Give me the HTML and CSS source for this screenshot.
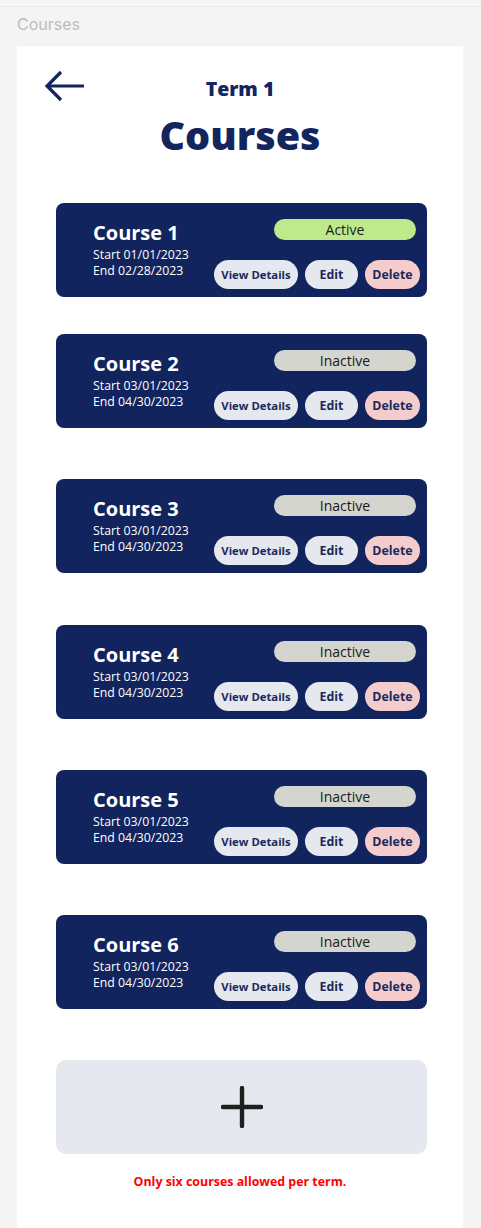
FILE: index.html
```html
<!DOCTYPE html>
<html lang="en">
<head>
<meta charset="utf-8">
<title>Courses</title>
<link rel="stylesheet" href="styles.css">
</head>
<body>
<div class="topbar"></div>
<div class="page-label">Courses</div>
<main class="panel">
  <header class="header">
    <button class="back" aria-label="Back">
      <svg width="42" height="34" viewBox="0 0 42 34"><path d="M40 17H3M17 3L3 17L17 31" fill="none" stroke="#13255f" stroke-width="3.2" stroke-linecap="butt" stroke-linejoin="miter"/></svg>
    </button>
    <div class="titles">
      <div class="term">Term 1</div>
      <h1 class="title">Courses</h1>
    </div>
    <div></div>
  </header>

  <section class="list">
    <article class="card first">
      <div class="info">
        <div class="name">Course 1</div>
        <div class="date">Start 01/01/2023</div>
        <div class="date">End 02/28/2023</div>
      </div>
      <div class="side">
        <div class="pill active">Active</div>
        <div class="actions">
          <button class="btn view">View Details</button>
          <button class="btn edit">Edit</button>
          <button class="btn del">Delete</button>
        </div>
      </div>
    </article>
    <article class="card">
      <div class="info">
        <div class="name">Course 2</div>
        <div class="date">Start 03/01/2023</div>
        <div class="date">End 04/30/2023</div>
      </div>
      <div class="side">
        <div class="pill">Inactive</div>
        <div class="actions">
          <button class="btn view">View Details</button>
          <button class="btn edit">Edit</button>
          <button class="btn del">Delete</button>
        </div>
      </div>
    </article>
    <article class="card">
      <div class="info">
        <div class="name">Course 3</div>
        <div class="date">Start 03/01/2023</div>
        <div class="date">End 04/30/2023</div>
      </div>
      <div class="side">
        <div class="pill">Inactive</div>
        <div class="actions">
          <button class="btn view">View Details</button>
          <button class="btn edit">Edit</button>
          <button class="btn del">Delete</button>
        </div>
      </div>
    </article>
    <article class="card">
      <div class="info">
        <div class="name">Course 4</div>
        <div class="date">Start 03/01/2023</div>
        <div class="date">End 04/30/2023</div>
      </div>
      <div class="side">
        <div class="pill">Inactive</div>
        <div class="actions">
          <button class="btn view">View Details</button>
          <button class="btn edit">Edit</button>
          <button class="btn del">Delete</button>
        </div>
      </div>
    </article>
    <article class="card">
      <div class="info">
        <div class="name">Course 5</div>
        <div class="date">Start 03/01/2023</div>
        <div class="date">End 04/30/2023</div>
      </div>
      <div class="side">
        <div class="pill">Inactive</div>
        <div class="actions">
          <button class="btn view">View Details</button>
          <button class="btn edit">Edit</button>
          <button class="btn del">Delete</button>
        </div>
      </div>
    </article>
    <article class="card">
      <div class="info">
        <div class="name">Course 6</div>
        <div class="date">Start 03/01/2023</div>
        <div class="date">End 04/30/2023</div>
      </div>
      <div class="side">
        <div class="pill">Inactive</div>
        <div class="actions">
          <button class="btn view">View Details</button>
          <button class="btn edit">Edit</button>
          <button class="btn del">Delete</button>
        </div>
      </div>
    </article>
    <button class="add" aria-label="Add course">
      <svg width="42" height="42" viewBox="0 0 42 42"><path d="M21 2V40M2 21H40" stroke="#1f1f1f" stroke-width="4.4" stroke-linecap="round"/></svg>
    </button>
  </section>
  <p class="error">Only six courses allowed per term.</p>
</main>
</body>
</html>
```

FILE: styles.css
```css
* { box-sizing: border-box; }

html, body {
  margin: 0;
  padding: 0;
  background: #f4f4f4;
  font-family: "Open Sans", "Liberation Sans", sans-serif;
}

body {
  min-height: 1228px;
  display: flex;
  flex-direction: column;
}

.topbar {
  height: 7px;
  background: #f4f5f7;
  border-bottom: 1px solid #eaebf0;
}

.page-label {
  font-family: Inter, "Liberation Sans", sans-serif;
  font-size: 16px;
  line-height: 20px;
  color: #bdbdbd;
  padding: 7px 0 0 17px;
  height: 39px;
}

.panel {
  flex: 1;
  margin: 0 18px 0 17px;
  background: #ffffff;
  padding-top: 23px;
}

.header {
  display: grid;
  grid-template-columns: 1fr auto 1fr;
  align-items: start;
}

.back {
  justify-self: start;
  margin-left: 27px;
  padding: 0;
  border: 0;
  background: none;
  width: 42px;
  height: 34px;
  display: block;
}
.back svg { display: block; }

.titles {
  text-align: center;
  padding-top: 8px;
}

.term {
  font-size: 19.5px;
  line-height: 24px;
  font-weight: 800;
  color: #13255f;
}

.title {
  margin: 10px 0 0;
  font-size: 39.5px;
  line-height: 48px;
  font-weight: 800;
  color: #13255f;
}

.list {
  margin: 44px 36px 0 39px;
  display: flex;
  flex-direction: column;
  gap: 51.2px;
}

.card {
  height: 94px;
  background: #12245e;
  border-radius: 8px;
  display: flex;
  justify-content: space-between;
}
.card.first { margin-bottom: -14px; }

.info {
  padding: 18px 0 0 37px;
  color: #ffffff;
}

.name {
  font-size: 20px;
  line-height: 24px;
  font-weight: 700;
  margin-bottom: 2px;
}

.date {
  font-size: 12.3px;
  line-height: 16px;
}

.side {
  display: flex;
  flex-direction: column;
  align-items: flex-end;
  padding: 16px 7px 0 0;
}

.pill {
  width: 142px;
  height: 21px;
  margin-right: 4px;
  border-radius: 11px;
  background: #d3d5ce;
  color: #1a1a1a;
  font-size: 14px;
  line-height: 21px;
  text-align: center;
}
.pill.active { background: #bfea8c; }

.actions {
  display: flex;
  gap: 7px;
  margin-top: 20px;
}

.btn {
  height: 29px;
  border: 0;
  border-radius: 15px;
  padding: 0;
  background: #e5e8ef;
  color: #1b2a5c;
  font-family: "Open Sans", "Liberation Sans", sans-serif;
  font-size: 11.3px;
  font-weight: 700;
  line-height: 29px;
  text-align: center;
}
.btn.view { width: 84px; }
.btn.edit { width: 53px; font-size: 12.4px; }
.btn.del { width: 55px; background: #f4cccc; font-size: 12.4px; }

.add {
  height: 94px;
  border: 0;
  border-radius: 10px;
  background: #e5e8ee;
  display: flex;
  align-items: center;
  justify-content: center;
  padding: 0;
}
.add svg { display: block; }

.error {
  margin: 20px 0 0;
  text-align: center;
  color: #ff0000;
  font-size: 12.4px;
  font-weight: 700;
  line-height: 16px;
}
```
